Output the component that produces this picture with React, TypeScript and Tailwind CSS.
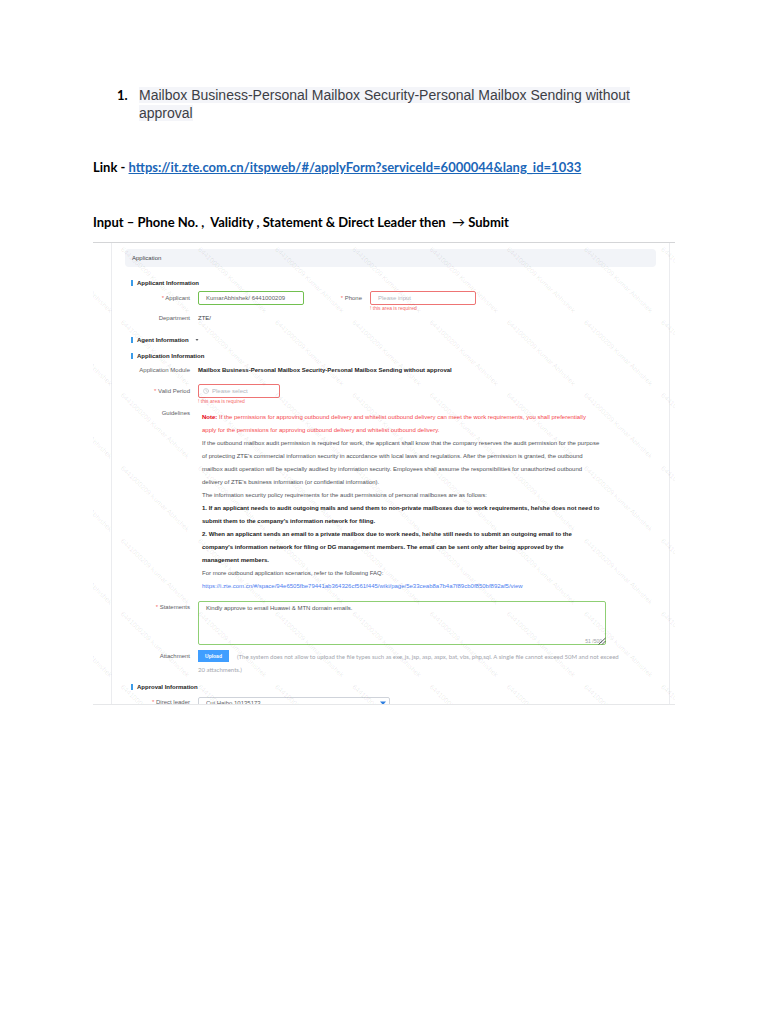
import type { ReactNode } from "react";
import { Clock } from "lucide-react";

const COLUMNS = [0, 1, 2, 3, 4, 5, 6, 7, 8];
const ROWS = [0, 1, 2, 3, 4, 5, 6];

function Watermark() {
  return (
    <svg
      aria-hidden="true"
      className="pointer-events-none absolute inset-0 h-full w-full overflow-hidden"
    >
      {ROWS.map((row) =>
        COLUMNS.map((col) => (
          <text
            key={`${row}-${col}`}
            transform={`translate(${col * 77.2 - 50} ${row * 72.9 + 7}) rotate(43.5)`}
            fontSize="7"
            fill="#000000"
            fillOpacity="0.09"
          >
            6441000209 Kumar Abhishek
          </text>
        ))
      )}
    </svg>
  );
}

function SectionTitle({ children, className = "" }: { children: ReactNode; className?: string }) {
  return (
    <h2
      className={`ml-1.5 flex h-2 items-center gap-1 whitespace-nowrap font-bold leading-2 text-[#222222] ${className}`}
    >
      <span className="h-1.5 w-0.5 bg-[#3a9be8]" />
      {children}
    </h2>
  );
}

interface LabelProps {
  children: ReactNode;
  htmlFor?: string;
  required?: boolean;
  className?: string;
}

function Label({ children, htmlFor, required, className = "w-[65px]" }: LabelProps) {
  return (
    <label htmlFor={htmlFor} className={`shrink-0 whitespace-nowrap text-right text-[#606266] ${className}`}>
      {required && <span className="text-[#f56c6c]">* </span>}
      {children}
    </label>
  );
}

function FieldError() {
  return (
    <p className="h-1.5 whitespace-nowrap text-[5px] leading-1.5 text-[#f56c6c]">! this area is required</p>
  );
}

export default function App() {
  return (
    <main className="min-h-screen bg-white px-[93px] pt-[86px] font-['Liberation_Sans',Arial,sans-serif]">
      <ol className="pl-6">
        <li className="flex text-[14px] leading-[18px] text-[#3c3e46]">
          <span className="w-[22px] shrink-0 font-['Lato',sans-serif] text-[13px] font-bold text-black">1.</span>
          <h1>
            <span className="bg-[#f4f5f9]">
              Mailbox Business-Personal Mailbox Security-Personal Mailbox Sending without approval
            </span>
          </h1>
        </li>
      </ol>

      <p className="mt-9 whitespace-nowrap font-['Lato',sans-serif] text-[13px] font-bold leading-[18px] text-black">
        Link -{" "}
        <a
          href="https://it.zte.com.cn/itspweb/#/applyForm?serviceId=6000044&lang_id=1033"
          className="text-[#1b66b8] underline"
        >
          https://it.zte.com.cn/itspweb/#/applyForm?serviceId=6000044&amp;lang_id=1033
        </a>
      </p>
      <p className="mt-9 whitespace-pre font-['Lato',sans-serif] text-[13px] font-bold leading-[20px] text-black">
        {"Input – Phone No. ,  Validity , Statement & Direct Leader then  "}
        <span className="font-normal">→</span> Submit
      </p>

      <section className="relative mt-2.5 overflow-hidden border-b border-t border-b-[#e6e7e9] border-t-[#d4d5d7] text-[6px] leading-2">
        <form className="ml-[18px] mr-[5px] border-x border-[#ebecef] px-[13px] pt-1.5">
          <header className="flex h-[18px] items-center rounded-sm bg-[#f2f4f8] px-[7px] text-[#404348]">
            Application
          </header>

          <SectionTitle className="mt-3">Applicant Information</SectionTitle>
          <div className="mt-1 flex items-start gap-2 leading-[14px]">
            <Label htmlFor="applicant" required>
              Applicant
            </Label>
            <input
              id="applicant"
              defaultValue="KumarAbhishek/ 6441000209"
              className="h-[14px] w-[106px] rounded-xs border border-[#72c050] bg-white px-[7px] text-[#606266]"
            />
            <Label htmlFor="phone" required className="w-[50px]">
              Phone
            </Label>
            <div>
              <input
                id="phone"
                placeholder="Please input"
                className="block h-[14px] w-[106px] rounded-xs border border-[#ee7474] bg-white px-[7px] placeholder:text-[#b2b6be]"
              />
              <FieldError />
            </div>
          </div>
          <div className="mt-[3px] flex gap-2">
            <Label>Department</Label>
            <span className="text-[#404348]">ZTE/</span>
          </div>

          <SectionTitle className="mt-3.5">
            Agent Information
            <svg viewBox="0 0 4 4" className="ml-0.5 size-1 fill-[#606266]">
              <path d="M0.5 1h3L2 3z" />
            </svg>
          </SectionTitle>

          <SectionTitle className="mt-2">Application Information</SectionTitle>
          <div className="mt-1.5 flex gap-2">
            <Label>Application Module</Label>
            <strong className="whitespace-nowrap text-[#222222]">
              Mailbox Business-Personal Mailbox Security-Personal Mailbox Sending without approval
            </strong>
          </div>
          <div className="mt-2.5 flex items-start gap-2 leading-[14px]">
            <Label htmlFor="period" required>
              Valid Period
            </Label>
            <div>
              <div className="flex h-[14px] w-[82px] items-center gap-[3px] rounded-xs border border-[#ee7474] bg-white px-1">
                <Clock className="size-1.5 shrink-0 text-[#b2b6be]" />
                <input
                  id="period"
                  placeholder="Please select"
                  className="h-full w-full min-w-0 placeholder:text-[#b2b6be]"
                />
              </div>
              <FieldError />
            </div>
          </div>

          <div className="mt-[5px] flex gap-2">
            <Label>Guidelines</Label>
            <div className="whitespace-nowrap pl-1 pt-0.5 leading-[13px] text-[#505257]">
              <p className="text-[#f5474c]">
                <strong className="text-[#e60012]">Note:</strong> If the permissions for approving outbound delivery and
                whitelist outbound delivery can meet the work requirements, you shall preferentially
                <br />
                apply for the permissions for approving outbound delivery and whitelist outbound delivery.
              </p>
              <p>
                If the outbound mailbox audit permission is required for work, the applicant shall know that the company
                reserves the audit permission for the purpose
                <br />
                of protecting ZTE's commercial information security in accordance with local laws and regulations. After
                the permission is granted, the outbound
                <br />
                mailbox audit operation will be specially audited by information security. Employees shall assume the
                responsibilities for unauthorized outbound
                <br />
                delivery of ZTE's business information (or confidential information).
              </p>
              <p>The information security policy requirements for the audit permissions of personal mailboxes are as follows:</p>
              <p className="font-bold text-[#222222]">
                1. If an applicant needs to audit outgoing mails and send them to non-private mailboxes due to work
                requirements, he/she does not need to
                <br />
                submit them to the company's information network for filing.
              </p>
              <p className="font-bold text-[#222222]">
                2. When an applicant sends an email to a private mailbox due to work needs, he/she still needs to submit
                an outgoing email to the
                <br />
                company's information network for filing or DG management members. The email can be sent only after
                being approved by the
                <br />
                management members.
              </p>
              <p>For more outbound application scenarios, refer to the following FAQ:</p>
              <p>
                <a
                  href="https://i.zte.com.cn/#/space/94e6505fbe79441ab364326cf561f445/wiki/page/5e33ceab8a7b4a7f89cb0f850bf892af5/view"
                  className="text-[#4c7df0]"
                >
                  https://i.zte.com.cn/#/space/94e6505fbe79441ab364326cf561f445/wiki/page/5e33ceab8a7b4a7f89cb0f850bf892af5/view
                </a>
              </p>
            </div>
          </div>

          <div className="mt-2 flex gap-2 leading-[13px]">
            <Label htmlFor="statements" required>
              Statements
            </Label>
            <div className="relative mr-[50px] flex-1">
              <textarea
                id="statements"
                defaultValue="Kindly approve to email Huawei & MTN domain emails."
                className="block h-11 w-full resize-none rounded-xs border border-[#8fcf74] bg-white px-[7px] text-[#505257]"
              />
              <span className="absolute bottom-0 right-1 text-[5px] leading-2 text-[#a0a3a8]">51 /500</span>
              <svg viewBox="0 0 8 8" className="absolute bottom-0 right-0 size-2 stroke-[#444444]">
                <path d="M0.5 7.5 7.5 1M4 7.5 7.5 4" fill="none" strokeWidth="0.9" />
              </svg>
            </div>
          </div>

          <div className="mt-[5px] flex items-start gap-2 leading-[13px]">
            <Label>Attachment</Label>
            <button type="button" className="h-3 w-[31px] shrink-0 bg-[#409eff] text-center text-[5px] font-bold text-white">
              Upload
            </button>
            <p className="-ml-[39px] whitespace-nowrap indent-[39px] font-['Lato',sans-serif] text-[#a3a6ae]">
              (The system does not allow to upload the file types such as exe, js, jsp, asp, aspx, bat, vbs, php,sql. A
              single file cannot exceed 50M and not exceed
              <br />
              <span className="inline-block indent-0">20 attachments.)</span>
            </p>
          </div>

          <SectionTitle className="mt-[7px]">Approval Information</SectionTitle>
          <div className="mt-1.5 flex h-[7px] items-start gap-2 overflow-hidden leading-[11px]">
            <Label htmlFor="leader" required>
              Direct leader
            </Label>
            <div className="relative">
              <select
                id="leader"
                className="block h-3 w-48 appearance-none rounded-xs border border-[#cfd3da] bg-white px-[7px] text-[#606266]"
              >
                <option>Cui Haibo 10135173</option>
              </select>
              <svg viewBox="0 0 6 4" className="pointer-events-none absolute right-1 top-1 h-1 w-1.5 fill-[#2f7fe0]">
                <path d="M0 0.5h6L3 4z" />
              </svg>
            </div>
          </div>
        </form>
        <Watermark />
      </section>
    </main>
  );
}
